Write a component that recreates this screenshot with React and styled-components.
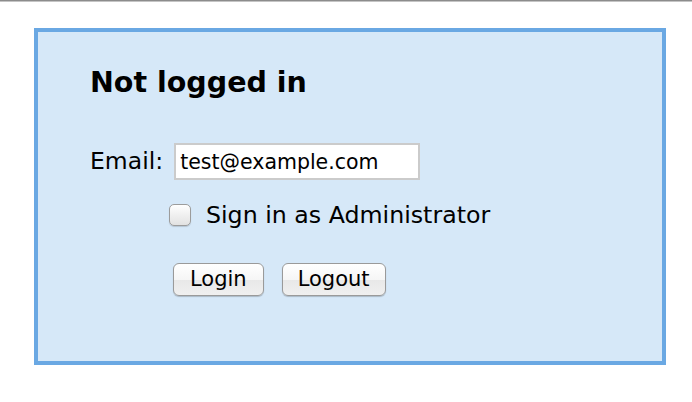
import React from 'react';
import styled, { createGlobalStyle } from 'styled-components';

const Global = createGlobalStyle`
  html, body {
    margin: 0;
    padding: 0;
    background: #fff;
    font-family: "DejaVu Sans", "Liberation Sans", sans-serif;
    color: #000;
  }
`;

const TopRule = styled.div`
  height: 1px;
  background: #8c8c8c;
  border-bottom: 1px solid #c4c4c4;
`;

const Panel = styled.div`
  box-sizing: border-box;
  width: 632px;
  height: 337px;
  margin: 26px 0 0 34px;
  padding: 34px 0 0 52px;
  border: 4px solid #6aa8e3;
  background: #d6e8f8;
  display: flex;
  flex-direction: column;
`;

const Title = styled.h2`
  margin: 0;
  font-size: 28.5px;
  font-weight: bold;
  line-height: 34px;
`;

const EmailRow = styled.div`
  display: flex;
  align-items: center;
  gap: 11px;
  margin-top: 43px;
`;

const Label = styled.label`
  font-size: 23.5px;
  line-height: 27px;
`;

const TextInput = styled.input`
  box-sizing: border-box;
  width: 246px;
  height: 37px;
  padding: 0 0 0 4px;
  border: 2px solid #cbcbcb;
  background: #fff;
  font-family: "DejaVu Sans", sans-serif;
  font-size: 20.5px;
  color: #000;
  outline: none;
`;

const CheckRow = styled.label`
  display: flex;
  align-items: center;
  gap: 15px;
  margin: 21px 0 0 79px;
  font-size: 23.7px;
  line-height: 28px;
`;

const Box = styled.input`
  appearance: none;
  box-sizing: border-box;
  width: 22px;
  height: 22px;
  margin: 0;
  border: 1px solid #9c9c9c;
  border-radius: 5px;
  background: linear-gradient(#ffffff, #f0f0f0 50%, #e2e2e2);
  box-shadow: 0 1px 1px rgba(0, 0, 0, 0.15);
`;

const Actions = styled.div`
  display: flex;
  gap: 18px;
  margin: 34px 0 0 83px;
`;

const Button = styled.button`
  box-sizing: border-box;
  height: 33px;
  padding: 0 ${p => p.$pad}px;
  border: 1px solid #9a9a9a;
  border-radius: 6px;
  background: linear-gradient(#ffffff, #f6f6f6 50%, #e8e8e8 51%, #f0f0f0);
  box-shadow: 0 1px 1px rgba(0, 0, 0, 0.2);
  font-family: "DejaVu Sans", sans-serif;
  font-size: 21px;
  line-height: 31px;
  color: #000;
`;

export default function App() {
  return (
    <>
      <Global />
      <TopRule />
      <Panel>
        <Title>Not logged in</Title>
        <EmailRow>
          <Label htmlFor="email">Email:</Label>
          <TextInput id="email" defaultValue="test@example.com" />
        </EmailRow>
        <CheckRow>
          <Box type="checkbox" />
          Sign in as Administrator
        </CheckRow>
        <Actions>
          <Button $pad={16}>Login</Button>
          <Button $pad={15}>Logout</Button>
        </Actions>
      </Panel>
    </>
  );
}
